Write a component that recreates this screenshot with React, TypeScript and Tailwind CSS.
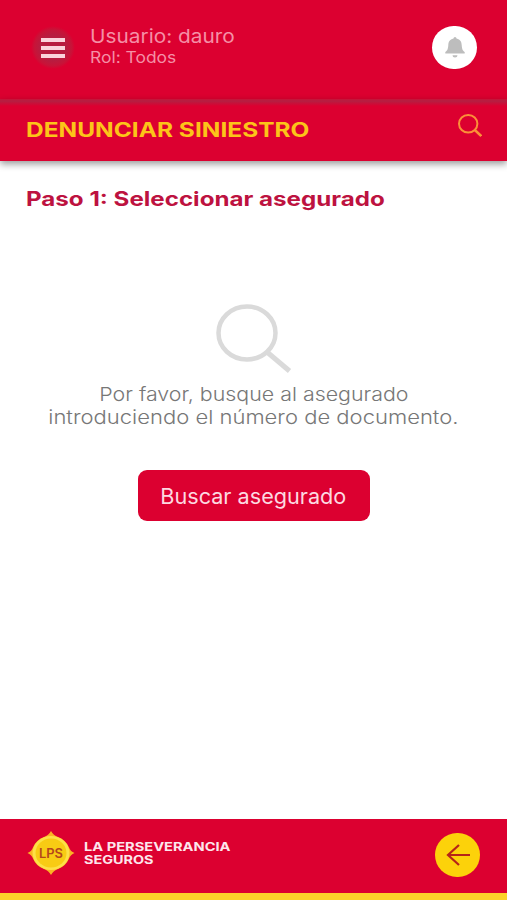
function LpsLogo() {
  return (
    <svg viewBox="0 0 48 44" className="h-[44px] w-[48px] shrink-0">
      <path
        d="M24 0 Q26.500 4.500 31 6 Q39 9 42 16.500 Q43.500 20.500 47.500 22 Q43.500 23.500 42 27.500 Q39 35 31 38 Q26.500 39.500 24 44 Q21.500 39.500 17 38 Q9 35 6 27.500 Q4.500 23.500 .5 22 Q4.500 20.500 6 16.500 Q9 9 17 6 Q21.500 4.500 24 0Z"
        fill="#fbb324"
      />
      <ellipse cx="24" cy="22" rx="18.500" ry="17" fill="#fde047" />
      <ellipse cx="24" cy="22" rx="15.500" ry="14.500" fill="#f8cb14" />
      <text
        x="24"
        y="26.500"
        textAnchor="middle"
        textLength="24"
        lengthAdjust="spacingAndGlyphs"
        className="fill-[#b5471c] font-['Inter',sans-serif] text-[12.5px] font-semibold"
      >
        LPS
      </text>
    </svg>
  );
}

function Header() {
  return (
    <header className="flex h-[99px] items-start bg-[#dc0030] pl-[31px] pr-[30px]">
      <button className="mt-[26px] flex h-[43px] w-[44px] flex-col items-center justify-center gap-[4px] rounded-full bg-[radial-gradient(closest-side,#b81c40_60%,#c81338_85%,#dc0030)]">
        <span className="h-[4px] w-6 bg-[#fbd3dc]" />
        <span className="h-[4px] w-6 bg-[#fbd3dc]" />
        <span className="h-[4px] w-6 bg-[#fbd3dc]" />
      </button>
      <div className="ml-[15px] mt-[25px] flex-1 whitespace-nowrap text-[#f58fa6]">
        <p className="w-max origin-left scale-x-[1.125] text-[18.5px] leading-[22px]">Usuario: dauro</p>
        <p className="w-max origin-left scale-x-[1.09] text-[16px] leading-[21px]">Rol: Todos</p>
      </div>
      <button className="mt-[26px] flex h-[43px] w-[45px] items-center justify-center rounded-full bg-white">
        <svg viewBox="0 0 20 21" className="h-[21px] w-[20px]" fill="#bdbdbd">
          <path d="M10 0 a1.5 1.5 0 0 1 1.5 1.5 C15.500 2.4 16.500 5 16.700 8 C17 12 17.500 13.5 19.700 15 V16.5 H.3 V15 C2.500 13.5 3 12 3.300 8 C3.500 5 4.500 2.4 8.500 1.5 A1.5 1.5 0 0 1 10 0Z" />
          <path d="M7.500 18.300 H12.500 A2.500 2.200 0 0 1 7.500 18.300Z" />
        </svg>
      </button>
    </header>
  );
}

function TitleBar() {
  return (
    <div className="relative flex h-[62px] items-start justify-between bg-[linear-gradient(to_bottom,#c81338_0px,#b41f42_2px,#dc0030_7px)] pl-[26px] pr-[25px] shadow-[0_3px_7px_rgba(0,0,0,0.4)]">
      <h1 className="mt-[19px] w-max origin-left scale-x-[1.255] whitespace-nowrap text-[19.5px] font-bold leading-6 text-[#fcc419]">
        DENUNCIAR SINIESTRO
      </h1>
      <svg viewBox="0 0 24 23" className="mt-[15px] h-[23px] w-[24px]" fill="none" stroke="#fb9038" strokeWidth="2">
        <ellipse cx="10.200" cy="9.800" rx="9.200" ry="8.800" />
        <path d="M16.800 16 L23.200 22" strokeWidth="2.400" />
      </svg>
    </div>
  );
}

function Footer() {
  return (
    <footer className="flex h-[81px] items-start border-b-[7px] border-[#fcd22a] bg-[#dc0030] pl-[27px] pr-[27px]">
      <div className="mt-[12px]">
        <LpsLogo />
      </div>
      <div className="ml-[9px] mt-[21px] flex-1 whitespace-nowrap text-[12px] font-bold leading-[13px] text-[#fde6ec]">
        <p className="w-max origin-left scale-x-[1.22]">LA PERSEVERANCIA</p>
        <p className="w-max origin-left scale-x-[1.2]">SEGUROS</p>
      </div>
      <button className="mt-[14px] flex h-[44px] w-[45px] items-center justify-center rounded-full bg-[#fcd20a]">
        <svg viewBox="0 0 24 22" className="h-[22px] w-[24px]" fill="none" stroke="#b52418" strokeWidth="2.2">
          <path d="M13 1 L2 11 L13 21 M2 11 H24" />
        </svg>
      </button>
    </footer>
  );
}

export default function App() {
  return (
    <div className="flex h-[900px] w-full flex-col overflow-hidden bg-white font-['Inter',sans-serif]">
      <Header />
      <TitleBar />
      <main className="flex flex-1 flex-col items-center">
        <h2 className="ml-[26px] mt-[26px] w-max origin-left scale-x-[1.207] self-start whitespace-nowrap text-[20px] font-bold leading-6 text-[#bd1240]">
          Paso 1: Seleccionar asegurado
        </h2>
        <svg viewBox="0 0 76 70" className="mt-[93px] h-[70px] w-[76px]" fill="none" stroke="#dadada" strokeWidth="4.5">
          <ellipse cx="31" cy="29" rx="28.500" ry="26.500" />
          <path d="M51 48 L73.500 67" strokeWidth="5" />
        </svg>
        <div className="mt-[9px] flex flex-col items-center whitespace-nowrap text-[18.5px] font-light leading-[23px] text-[#777777]">
          <p className="scale-x-[1.155]">Por favor, busque al asegurado</p>
          <p className="scale-x-[1.19]">introduciendo el número de documento.</p>
        </div>
        <button className="mt-[41px] h-[51px] w-[232px] rounded-[9px] bg-[#dc0030] pt-[2px] text-[21px] text-[#fdd9e1]">
          <span className="inline-block scale-x-[1.03] whitespace-nowrap">Buscar asegurado</span>
        </button>
      </main>
      <Footer />
    </div>
  );
}
